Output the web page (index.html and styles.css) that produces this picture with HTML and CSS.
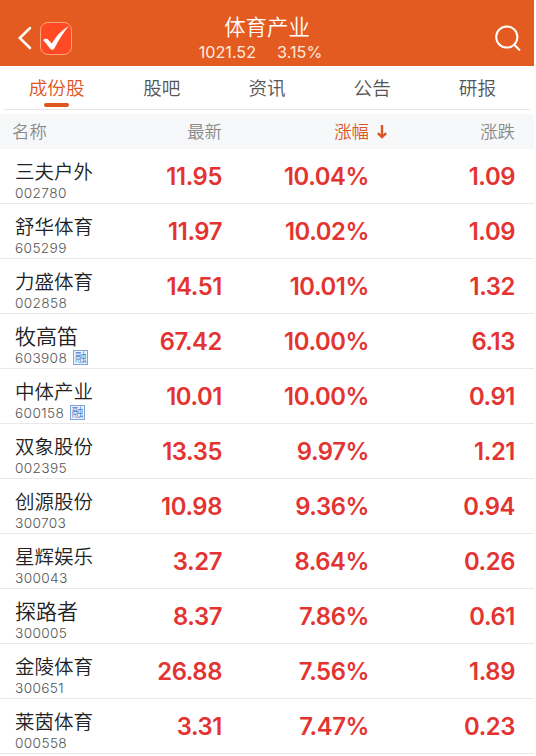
FILE: index.html
```html
<!DOCTYPE html>
<html lang="zh-CN">
<head>
    <meta charset="UTF-8">
    <meta name="viewport" content="width=device-width, initial-scale=1.0">
    <title>体育产业</title>
    <link rel="stylesheet" href="styles.css">
</head>
<body>
    <!-- Top bar -->
    <header class="header">
        <div class="header-left">
            <svg class="back-icon" width="14" height="24" viewBox="0 0 14 24"><path d="M12 2 L1.8 12 L12 22" fill="none" stroke="#fff" stroke-width="2.5" stroke-linecap="round"/></svg>
            <svg class="logo" width="32" height="33" viewBox="0 0 32 33">
                <rect x="0.5" y="0.5" width="31" height="32" rx="7.5" fill="#ff4a24" stroke="#ffa27c"/>
                <path d="M3.2 18.2 C4.8 16 7.4 16.4 8.5 18 L11.8 21.4 C16 14.6 21 8.5 28.8 4 C24 9.8 18.6 18 14.6 26 C13.4 28.3 11.2 28.3 9.8 26.3 C7.7 23.2 5.8 21 3.2 18.2 Z" fill="#fff"/>
            </svg>
        </div>
        <div class="header-title">
            <h1>体育产业</h1>
            <div class="index-info"><span>1021.52</span><span>3.15%</span></div>
        </div>
        <div class="header-right">
            <svg width="26" height="27" viewBox="0 0 26 27" fill="none" stroke="#fff" stroke-width="2"><circle cx="11.8" cy="12" r="10.6"/><path d="M19 19.5 L25 25.5"/></svg>
        </div>
    </header>

    <!-- Tabs -->
    <nav class="tabs">
        <a class="tab active">成份股</a>
        <a class="tab">股吧</a>
        <a class="tab">资讯</a>
        <a class="tab">公告</a>
        <a class="tab">研报</a>
    </nav>

    <!-- Stock list -->
    <div class="list-head">
        <span>名称</span>
        <span class="num">最新</span>
        <span class="num sorted">涨幅<svg width="10" height="14" viewBox="0 0 10 14" fill="none" stroke="#de561f" stroke-width="2.4"><path d="M5 0 V12.5 M0.8 8.2 L5 12.2 L9.2 8.2"/></svg></span>
        <span class="num">涨跌</span>
    </div>
    <div class="list">
        <div class="row"><div class="stock"><div class="name">三夫户外</div><div class="code">002780</div></div><span class="num">11.95</span><span class="num">10.04%</span><span class="num">1.09</span></div>
        <div class="row"><div class="stock"><div class="name">舒华体育</div><div class="code">605299</div></div><span class="num">11.97</span><span class="num">10.02%</span><span class="num">1.09</span></div>
        <div class="row"><div class="stock"><div class="name">力盛体育</div><div class="code">002858</div></div><span class="num">14.51</span><span class="num">10.01%</span><span class="num">1.32</span></div>
        <div class="row"><div class="stock"><div class="name short">牧高笛</div><div class="code">603908<i class="tag">融</i></div></div><span class="num">67.42</span><span class="num">10.00%</span><span class="num">6.13</span></div>
        <div class="row"><div class="stock"><div class="name">中体产业</div><div class="code">600158<i class="tag">融</i></div></div><span class="num">10.01</span><span class="num">10.00%</span><span class="num">0.91</span></div>
        <div class="row"><div class="stock"><div class="name">双象股份</div><div class="code">002395</div></div><span class="num">13.35</span><span class="num">9.97%</span><span class="num">1.21</span></div>
        <div class="row"><div class="stock"><div class="name">创源股份</div><div class="code">300703</div></div><span class="num">10.98</span><span class="num">9.36%</span><span class="num">0.94</span></div>
        <div class="row"><div class="stock"><div class="name">星辉娱乐</div><div class="code">300043</div></div><span class="num">3.27</span><span class="num">8.64%</span><span class="num">0.26</span></div>
        <div class="row"><div class="stock"><div class="name short">探路者</div><div class="code">300005</div></div><span class="num">8.37</span><span class="num">7.86%</span><span class="num">0.61</span></div>
        <div class="row"><div class="stock"><div class="name">金陵体育</div><div class="code">300651</div></div><span class="num">26.88</span><span class="num">7.56%</span><span class="num">1.89</span></div>
        <div class="row"><div class="stock"><div class="name">莱茵体育</div><div class="code">000558</div></div><span class="num">3.31</span><span class="num">7.47%</span><span class="num">0.23</span></div>
    </div>
</body>
</html>
```
FILE: styles.css
```css
* {
    box-sizing: border-box;
}

body {
    margin: 0;
    width: 534px;
    height: 756px;
    overflow: hidden;
    background-color: #fff;
    font-family: Inter, "Noto Sans CJK SC", sans-serif;
    font-weight: 350;
}

/* Top bar */
.header {
    display: grid;
    grid-template-columns: 120px 1fr 120px;
    height: 66px;
    background-color: #e45b21;
    color: #fff;
}

.header-left {
    display: flex;
    align-items: center;
    gap: 8px;
    padding: 10px 0 0 18px;
}

.header-title {
    display: flex;
    flex-direction: column;
    align-items: center;
    padding-top: 14px;
}

.header-title h1 {
    margin: 0;
    font-size: 21.4px;
    line-height: 27px;
    font-weight: 350;
}

.index-info {
    display: flex;
    gap: 21px;
    padding-right: 13px;
    font-size: 16.2px;
    line-height: 22px;
    font-weight: 400;
    color: #ffeadb;
}

.header-right {
    display: flex;
    justify-content: flex-end;
    align-items: center;
    padding: 11px 13px 0 0;
}

/* Tabs */
.tabs {
    display: grid;
    grid-template-columns: repeat(5, 1fr);
    height: 44px;
    margin: 0 4px;
    border-bottom: 1px solid #e6e6e6;
}

.tab {
    display: flex;
    flex-direction: column;
    align-items: center;
    padding-top: 8px;
    font-size: 18.6px;
    line-height: 28px;
    color: #555;
}

.tab.active {
    color: #de561f;
}

.tab.active::after {
    content: "";
    width: 25px;
    height: 4px;
    margin-top: 1px;
    border-radius: 2px;
    background-color: #de561f;
}

/* Stock list */
.list-head,
.row {
    display: grid;
    grid-template-columns: 122px 85px 147px 146px;
    padding-left: 15px;
    align-items: center;
}

.list-head {
    height: 35px;
    margin-top: 4px;
    padding: 0 0 2px 12px;
    grid-template-columns: 125px 85px 165px 128px;
    background-color: #f6f8fa;
    font-size: 17.4px;
    color: #8a8a8a;
}

.num {
    text-align: right;
}

.sorted {
    color: #de561f;
}

.sorted svg {
    margin-left: 8px;
    vertical-align: -1px;
}

.row {
    height: 55px;
    border-bottom: 1px solid #e9e9ec;
}

.row .num {
    padding-top: 2px;
    font-size: 23.8px;
    line-height: 52px;
    font-weight: 600;
    letter-spacing: -0.4px;
    color: #e33431;
}

.stock {
    padding-top: 7px;
}

.name {
    font-size: 19.5px;
    line-height: 26px;
    color: #222;
}

.name.short {
    font-size: 21px;
}

.code {
    display: flex;
    align-items: center;
    height: 15px;
    font-size: 13.7px;
    letter-spacing: 0.35px;
    color: #555;
}

.tag {
    width: 15px;
    height: 15px;
    margin-left: 6px;
    border: 1px solid #7da5dc;
    background-color: #edf4fd;
    color: #4d83cf;
    font-size: 12px;
    line-height: 13px;
    letter-spacing: 0;
    font-style: normal;
    display: flex;
    justify-content: center;
}
```
